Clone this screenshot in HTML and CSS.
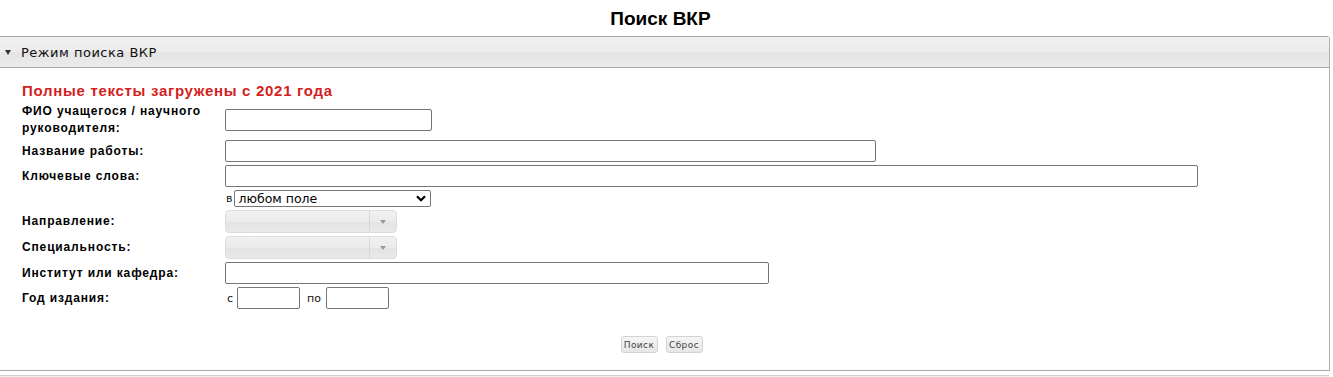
FILE: index.html
```html
<!DOCTYPE html>
<html lang="ru">
<head>
<meta charset="utf-8">
<title>Поиск ВКР</title>
<link rel="stylesheet" href="styles.css">
</head>
<body>
<h1 class="page-title">Поиск ВКР</h1>
<section class="panel">
  <div class="panel-head">
    <span class="tri"></span>
    <span class="panel-title">Режим поиска ВКР</span>
  </div>
  <div class="panel-body">
    <div class="notice">Полные тексты загружены с 2021 года</div>
    <div class="form">
      <label class="lbl">ФИО учащегося / научного руководителя:</label>
      <div class="field"><input class="inp w-fio" type="text"></div>

      <label class="lbl">Название работы:</label>
      <div class="field"><input class="inp w-title" type="text"></div>

      <label class="lbl">Ключевые слова:</label>
      <div class="field"><input class="inp w-kw" type="text"></div>

      <div class="lbl"></div>
      <div class="field inline">
        <span class="small">в</span>
        <span class="sel-wrap">
          <select class="sel">
            <option>любом поле</option>
          </select>
          <svg class="chev" width="10" height="7" viewBox="0 0 10 7"><path d="M1 1.2 L5 5.2 L9 1.2" fill="none" stroke="#000" stroke-width="2.2"/></svg>
        </span>
      </div>

      <label class="lbl">Направление:</label>
      <div class="field">
        <div class="combo"><span class="combo-val"></span><span class="combo-btn"><span class="arr"></span></span></div>
      </div>

      <label class="lbl">Специальность:</label>
      <div class="field">
        <div class="combo"><span class="combo-val"></span><span class="combo-btn"><span class="arr"></span></span></div>
      </div>

      <label class="lbl">Институт или кафедра:</label>
      <div class="field"><input class="inp w-inst" type="text"></div>

      <label class="lbl">Год издания:</label>
      <div class="field inline">
        <span class="small s-from">с</span>
        <input class="inp w-year" type="text">
        <span class="small po">по</span>
        <input class="inp w-year" type="text">
      </div>
    </div>
    <div class="buttons">
      <button class="btn" type="button">Поиск</button>
      <button class="btn" type="button">Сброс</button>
    </div>
  </div>
</section>
<div class="next-panel"></div>
</body>
</html>
```

FILE: styles.css
```css
html, body {
  margin: 0;
  padding: 0;
  background: #fff;
}

body {
  font-family: "Liberation Sans", Arial, sans-serif;
  color: #000;
  width: 1333px;
  overflow: hidden;
}

.page-title {
  margin: 0;
  height: 36px;
  line-height: 37px;
  text-align: center;
  font-size: 19px;
  font-weight: bold;
  padding-right: 12px;
}

.panel {
  width: 1329px;
  border-top: 1px solid #a8a8a8;
  border-right: 1px solid #b0b0b0;
  border-bottom: 1px solid #a8a8a8;
  border-top-right-radius: 3px;
}

.panel-head {
  height: 30px;
  display: flex;
  align-items: center;
  background: linear-gradient(#f0f0f0 0%, #ececec 50%, #e4e4e4 51%, #ebebeb 100%);
  border-bottom: 1px solid #a8a8a8;
  padding-left: 5px;
}

.tri {
  width: 0;
  height: 0;
  border-left: 3.5px solid transparent;
  border-right: 3.5px solid transparent;
  border-top: 5px solid #333;
  margin-right: 10px;
  margin-top: 1px;
}

.panel-title {
  font-family: "DejaVu Sans", Verdana, sans-serif;
  font-size: 13px;
  letter-spacing: 0.5px;
  color: #111;
}

.panel-body {
  padding: 14px 0 17px 22px;
}

.notice {
  color: #d21f1f;
  font-weight: bold;
  font-size: 15px;
  letter-spacing: 0.7px;
  line-height: 18px;
  margin-bottom: 3px;
}

.form {
  display: grid;
  grid-template-columns: 203px 1fr;
  row-gap: 3px;
  align-items: center;
}

.lbl {
  font-weight: bold;
  font-size: 12px;
  letter-spacing: 0.85px;
  line-height: 17px;
  padding-right: 4px;
}

.field {
  display: flex;
  align-items: center;
}

.inp {
  box-sizing: border-box;
  height: 22px;
  border: 1px solid #767676;
  border-radius: 2px;
  padding: 1px 2px;
  margin: 0;
  font-family: "DejaVu Sans", Verdana, sans-serif;
  font-size: 12px;
  background: #fff;
}

.w-fio { width: 207px; }
.w-title { width: 651px; }
.w-kw { width: 973px; }
.w-inst { width: 544px; }
.w-year { width: 63px; }

.small {
  font-family: "DejaVu Sans", Verdana, sans-serif;
  font-size: 11px;
  color: #111;
  margin-left: 1px;
  margin-right: 2px;
}

.s-from {
  margin-left: 2px;
  margin-right: 4px;
}

.po {
  margin-left: 7px;
  margin-right: 5px;
}

.sel-wrap {
  position: relative;
  display: inline-flex;
}

.sel {
  appearance: none;
  -webkit-appearance: none;
  box-sizing: border-box;
  width: 197px;
  height: 17px;
  margin: 0;
  padding: 0 0 0 3px;
  border: 1px solid #767676;
  border-radius: 2px;
  font-family: "DejaVu Sans", Verdana, sans-serif;
  font-size: 12.5px;
  line-height: 15px;
  color: #000;
  background: #fff;
}

.chev {
  position: absolute;
  right: 5px;
  top: 5px;
  pointer-events: none;
}

.combo {
  box-sizing: border-box;
  width: 172px;
  height: 23px;
  display: flex;
  border: 1px solid #dcdcdc;
  border-radius: 4px;
  background: linear-gradient(#f1f1f1 0%, #ebebeb 50%, #e3e3e3 51%, #e9e9e9 100%);
}

.combo-val {
  flex: 1;
}

.combo-btn {
  width: 26px;
  border-left: 1px solid #d6d6d6;
  display: flex;
  align-items: center;
  justify-content: center;
}

.arr {
  width: 0;
  height: 0;
  border-left: 3.5px solid transparent;
  border-right: 3.5px solid transparent;
  border-top: 4px solid #9a9a9a;
}

.buttons {
  display: flex;
  justify-content: center;
  gap: 8px;
  margin-top: 27px;
  padding-right: 28px;
}

.btn {
  box-sizing: border-box;
  width: 37px;
  height: 17px;
  padding: 0;
  margin: 0;
  font-family: "DejaVu Sans", Verdana, sans-serif;
  font-size: 9px;
  letter-spacing: 0.4px;
  color: #444;
  border: 1px solid #d2d2d2;
  border-radius: 3px;
  background: linear-gradient(#f6f6f6, #e6e6e6);
}

.next-panel {
  margin-top: 4px;
  height: 6px;
  width: 1329px;
  border-top: 1px solid #cfcfcf;
  background: #f1f1f1;
}
```
